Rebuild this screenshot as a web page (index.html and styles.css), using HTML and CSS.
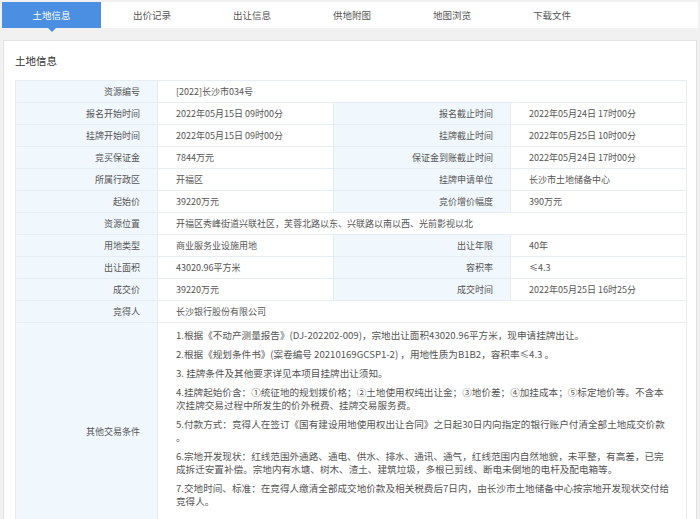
FILE: index.html
```html
<!DOCTYPE html>
<html lang="zh-CN">
<head>
<meta charset="utf-8">
<title>土地信息</title>
<link rel="stylesheet" href="styles.css">
</head>
<body>
<div class="tabs">
  <div class="tab active">土地信息</div>
  <div class="tab">出价记录</div>
  <div class="tab">出让信息</div>
  <div class="tab">供地附图</div>
  <div class="tab">地图浏览</div>
  <div class="tab">下载文件</div>
</div>
<div class="panel">
  <div class="panel-title">土地信息</div>
  <table class="info">
    <colgroup>
      <col class="c1"><col class="c2"><col class="c3"><col class="c4">
    </colgroup>
    <tr><th>资源编号</th><td colspan="3">[2022]长沙市034号</td></tr>
    <tr><th>报名开始时间</th><td>2022年05月15日 09时00分</td><th>报名截止时间</th><td>2022年05月24日 17时00分</td></tr>
    <tr><th>挂牌开始时间</th><td>2022年05月15日 09时00分</td><th>挂牌截止时间</th><td>2022年05月25日 10时00分</td></tr>
    <tr><th>竞买保证金</th><td>7844万元</td><th>保证金到账截止时间</th><td>2022年05月24日 17时00分</td></tr>
    <tr><th>所属行政区</th><td>开福区</td><th>挂牌申请单位</th><td>长沙市土地储备中心</td></tr>
    <tr><th>起始价</th><td>39220万元</td><th>竞价增价幅度</th><td>390万元</td></tr>
    <tr><th>资源位置</th><td colspan="3">开福区秀峰街道兴联社区，芙蓉北路以东、兴联路以南以西、光前影视以北</td></tr>
    <tr><th>用地类型</th><td>商业服务业设施用地</td><th>出让年限</th><td>40年</td></tr>
    <tr><th>出让面积</th><td>43020.96平方米</td><th>容积率</th><td>≤4.3</td></tr>
    <tr><th>成交价</th><td>39220万元</td><th>成交时间</th><td>2022年05月25日 16时25分</td></tr>
    <tr><th>竞得人</th><td colspan="3">长沙银行股份有限公司</td></tr>
    <tr class="other">
      <th>其他交易条件</th>
      <td colspan="3" class="terms">
        <p>1.根据《不动产测量报告》(DJ-202202-009)，宗地出让面积43020.96平方米，现申请挂牌出让。</p>
        <p>2.根据《规划条件书》(案卷编号 20210169GCSP1-2) ，用地性质为B1B2，容积率≤4.3 。</p>
        <p>3. 挂牌条件及其他要求详见本项目挂牌出让须知。</p>
        <p>4.挂牌起始价含：①统征地的规划拨价格；②土地使用权纯出让金；③地价差；④加挂成本；⑤标定地价等。不含本<br>次挂牌交易过程中所发生的价外税费、挂牌交易服务费。</p>
        <p>5.付款方式：竞得人在签订《国有建设用地使用权出让合同》之日起30日内向指定的银行账户付清全部土地成交价款<br>。</p>
        <p>6.宗地开发现状：红线范围外通路、通电、供水、排水、通讯、通气，红线范围内自然地貌，未平整，有高差，已完<br>成拆迁安置补偿。宗地内有水塘、树木、渣土、建筑垃圾，多根已剪线、断电未倒地的电杆及配电箱等。</p>
        <p>7.交地时间、标准：在竞得人缴清全部成交地价款及相关税费后7日内，由长沙市土地储备中心按宗地开发现状交付给<br>竞得人。</p>
      </td>
    </tr>
  </table>
</div>
</body>
</html>
```

FILE: styles.css
```css
html, body {
  margin: 0;
  padding: 0;
}
body {
  background: #f1f1f1;
  font-family: "Noto Sans CJK SC", "Noto Sans", sans-serif;
  color: #555;
  overflow: hidden;
}
.tabs {
  display: flex;
  margin: 2px 2px 0;
  height: 26px;
  background: #fff;
}
.tab {
  width: 100px;
  text-align: center;
  line-height: 26px;
  font-size: 9.5px;
  color: #555;
}
.tab.active {
  width: 99px;
  margin-right: 1px;
  background: #4a8fe2;
  color: #fff;
  position: relative;
}
.tab.active::after {
  content: "";
  position: absolute;
  left: 46px;
  bottom: -4px;
  border-left: 4px solid transparent;
  border-right: 4px solid transparent;
  border-top: 4px solid #4a8fe2;
}
.panel {
  margin: 12px 3px 0 3px;
  border: 1px solid #e2e2e2;
  border-bottom: none;
  background: #fff;
  padding: 0 10px 0 11px;
}
.panel-title {
  height: 39px;
  line-height: 39px;
  font-size: 10.5px;
  color: #333;
}
.info {
  border-collapse: collapse;
  width: 671px;
  table-layout: fixed;
}
.c1 { width: 142px; }
.c2 { width: 176px; }
.c3 { width: 177px; }
.c4 { width: 176px; }
.info th, .info td {
  border: 1px solid #e8edf1;
  height: 21px;
  padding: 0 17px 0 18px;
  font-size: 9px;
  font-weight: normal;
  line-height: 13px;
  white-space: nowrap;
  overflow: hidden;
}
.info th {
  background: #f1f8fd;
  text-align: right;
  color: #555;
}
.info td {
  text-align: left;
  color: #555;
}
.info td.terms {
  padding: 6px 10px 25px 18px;
  vertical-align: top;
  color: #555;
}
.terms p {
  margin: 0 0 6px;
  font-size: 9.6px;
  line-height: 13px;
  white-space: nowrap;
}
```
